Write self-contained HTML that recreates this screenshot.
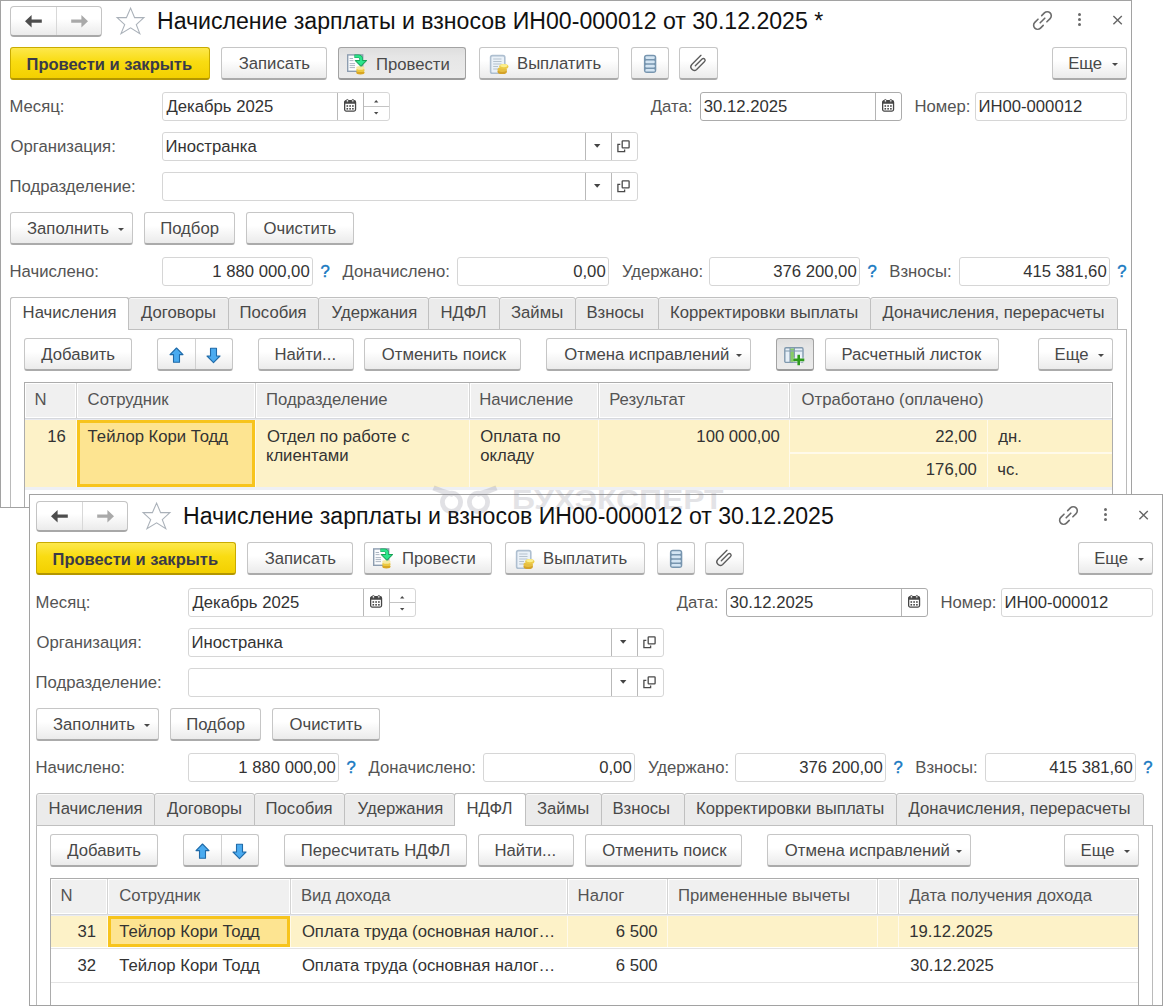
<!DOCTYPE html>
<html><head><meta charset="utf-8"><style>
html,body{margin:0;padding:0;}
body{width:1163px;height:1006px;overflow:hidden;position:relative;background:#fff;font-family:"Liberation Sans", sans-serif;}
body div{position:absolute;}
.t{white-space:nowrap;line-height:20px;}
</style></head><body>
<div style="left:0;top:0;width:1132px;height:508px;overflow:hidden;background:#fff">
<div style="left:10px;top:6px;width:92px;height:31px;box-sizing:border-box;border:1px solid #c4c4c4;border-bottom:2px solid #a8a8a8;border-radius:4px;background:linear-gradient(#ffffff 0%,#ffffff 42%,#f0f0f0 85%,#ebebeb 100%);"></div>
<div style="left:56px;top:7px;width:1px;height:28px;background:#d8d8d8;"></div>
<svg style="position:absolute;left:24px;top:14px;overflow:visible" width="20" height="14" viewBox="0 0 20 14"><path d="M1 7.2 L7.6 1 L7.6 5.6 L17.8 5.6 L17.8 8.8 L7.6 8.8 L7.6 13.4 Z" fill="#4d4d4d"/></svg>
<svg style="position:absolute;left:69px;top:14px;overflow:visible" width="20" height="14" viewBox="0 0 20 14"><path d="M19 7.2 L12.4 1 L12.4 5.6 L2.2 5.6 L2.2 8.8 L12.4 8.8 L12.4 13.4 Z" fill="#a9a9a9"/></svg>
<svg style="position:absolute;left:115px;top:6px;overflow:visible" width="32" height="30" viewBox="0 0 32 30"><path d="M15.6 2.1 L19.6 11.6 L28.9 11.6 L21.3 18.7 L24.8 27.6 L15.6 21.9 L6 27.6 L9.7 18.7 L2.1 11.6 L11.4 11.6 Z" fill="none" stroke="#aab1b9" stroke-width="1.1" stroke-linejoin="miter"/></svg>
<div class="t" style="left:157px;top:11.3px;font-size:23.1px;color:#111;font-weight:normal;">Начисление зарплаты и взносов ИН00-000012 от 30.12.2025 *</div>
<svg style="position:absolute;left:1031px;top:9px;overflow:visible" width="23" height="23" viewBox="0 0 23 23"><g fill="none" stroke="#6c6c6c" stroke-width="1.6" stroke-linecap="round"><path d="M10.7 6.6 L13.4 3.9 A3.3 3.3 0 0 1 19.1 9.6 L15.9 12.8"/><path d="M12.2 16.4 L9.5 19.1 A3.3 3.3 0 0 1 3.8 13.4 L7 10.2"/><path d="M9.2 13.8 L13.8 9.2"/></g></svg>
<div style="left:1077.6px;top:12.8px;width:3.6px;height:3.6px;border-radius:50%;background:#6a6a6a;"></div>
<div style="left:1077.6px;top:17.85px;width:3.6px;height:3.6px;border-radius:50%;background:#6a6a6a;"></div>
<div style="left:1077.6px;top:22.9px;width:3.6px;height:3.6px;border-radius:50%;background:#6a6a6a;"></div>
<svg style="position:absolute;left:1111px;top:14px;overflow:visible" width="13" height="12" viewBox="0 0 13 12"><path d="M2.4 2.1 L10.8 10.3 M10.8 2.1 L2.4 10.3" stroke="#666" stroke-width="1.4"/></svg>
<div style="left:10px;top:47px;width:200px;height:33px;box-sizing:border-box;border:1px solid #c9ab00;border-bottom:2px solid #b39600;border-radius:3px;background:linear-gradient(#fde84c 0%,#f9dc12 45%,#f3d000 100%);"></div>
<div class="t" style="left:26.6px;top:53.9px;font-size:16.5px;color:#3a3a48;font-weight:bold;">Провести и закрыть</div>
<div style="left:221px;top:47px;width:106px;height:33px;box-sizing:border-box;border:1px solid #c6c6c6;border-bottom:2px solid #ababab;border-radius:3px;background:linear-gradient(#ffffff 0%,#ffffff 42%,#f0f0f0 85%,#ebebeb 100%);"></div>
<div class="t" style="left:238.7px;top:53.9px;font-size:16.7px;color:#484848;font-weight:normal;">Записать</div>
<div style="left:338px;top:47px;width:128px;height:33px;box-sizing:border-box;border:1px solid #a3a3a3;border-bottom:2px solid #9a9a9a;border-radius:3px;background:linear-gradient(#dedede 0%,#e6e6e6 30%,#ebebeb 100%);"></div>
<svg style="position:absolute;left:346px;top:53px;overflow:visible" width="22" height="24" viewBox="0 0 22 24">
    <rect x="1.7" y="1.9" width="15" height="16.4" fill="#fbfcfe" stroke="#8d9db0" stroke-width="1.4"/>
    <g stroke="#a3aebb" stroke-width="0.9"><path d="M3.6 5.5 H7"/><path d="M3.6 7.6 H7.5"/><path d="M3.6 10.6 H9"/><path d="M3.6 12.6 H9"/><path d="M3.6 14.6 H9"/></g>
    <ellipse cx="14.4" cy="19.6" rx="4.2" ry="1.9" fill="#d9a622"/>
    <ellipse cx="14.4" cy="17.2" rx="4.2" ry="1.9" fill="#ecc940"/>
    <ellipse cx="14.4" cy="14.9" rx="4.2" ry="1.8" fill="#f6e9a0"/>
    <path d="M8.4 3.3 H12.4 Q15.1 3.3 15.1 6 V8.6" fill="none" stroke="#15a255" stroke-width="3.6"/>
    <path d="M9.1 7.5 H20.8 L14.9 13.4 Z" fill="#15a255" stroke="#15a255" stroke-width="1" stroke-linejoin="round"/>
    <path d="M8.9 3.3 H12.4 Q15.1 3.3 15.1 6 V9" fill="none" stroke="#2be58c" stroke-width="2.3"/>
    <path d="M10.4 8.1 H19.4 L14.9 12.4 Z" fill="#2be58c"/>
    </svg>
<div class="t" style="left:376px;top:54.9px;font-size:16.7px;color:#4a4a4a;font-weight:normal;">Провести</div>
<div style="left:479px;top:47px;width:140px;height:33px;box-sizing:border-box;border:1px solid #c6c6c6;border-bottom:2px solid #ababab;border-radius:3px;background:linear-gradient(#ffffff 0%,#ffffff 42%,#f0f0f0 85%,#ebebeb 100%);"></div>
<svg style="position:absolute;left:487.5px;top:52px;overflow:visible" width="24" height="24" viewBox="0 0 24 24">
    <rect x="2.6" y="3.6" width="14.2" height="17.6" rx="1.8" fill="#eaf1f8" stroke="#aebfd0" stroke-width="1.6"/>
    <g stroke="#b5c2ce" stroke-width="1"><path d="M5.2 7 H13.5"/><path d="M5.2 9.5 H13.5"/><path d="M5.2 12 H13.5"/><path d="M5.2 14.5 H10"/><path d="M5.2 17 H10"/></g>
    <ellipse cx="14.2" cy="19.4" rx="4.7" ry="2.6" fill="#d4a228"/>
    <ellipse cx="14.2" cy="17.6" rx="4.7" ry="2.4" fill="#e6bf42"/>
    <ellipse cx="15.8" cy="14.4" rx="4.6" ry="2.5" fill="#eccb48"/>
    <ellipse cx="15.8" cy="13.6" rx="3.6" ry="1.6" fill="#fbef8e"/>
    </svg>
<div class="t" style="left:517px;top:53.9px;font-size:16.7px;color:#484848;font-weight:normal;">Выплатить</div>
<div style="left:631px;top:47px;width:38px;height:33px;box-sizing:border-box;border:1px solid #c6c6c6;border-bottom:2px solid #ababab;border-radius:3px;background:linear-gradient(#ffffff 0%,#ffffff 42%,#f0f0f0 85%,#ebebeb 100%);"></div>
<svg style="position:absolute;left:643px;top:54.2px;overflow:visible" width="14" height="20" viewBox="0 0 14 20">
    <rect x="0.9" y="0.8" width="12.4" height="18.2" rx="3" fill="#7795af"/>
    <g fill="#d4e5f3"><rect x="2.4" y="2.3" width="9.4" height="2.7" rx="1.2"/><rect x="2.4" y="6.5" width="9.4" height="2.7" rx="1.2"/><rect x="2.4" y="10.7" width="9.4" height="2.7" rx="1.2"/><rect x="2.4" y="14.9" width="9.4" height="2.7" rx="1.2"/></g>
    </svg>
<div style="left:679px;top:47px;width:39px;height:33px;box-sizing:border-box;border:1px solid #c6c6c6;border-bottom:2px solid #ababab;border-radius:3px;background:linear-gradient(#ffffff 0%,#ffffff 42%,#f0f0f0 85%,#ebebeb 100%);"></div>
<svg style="position:absolute;left:686px;top:50px;overflow:visible" width="24" height="24" viewBox="0 0 24 24"><path d="M14.97 5.35 L5.78 14.55 A3.45 3.45 0 0 0 10.66 19.42 L18.58 11.51 A1.75 1.75 0 0 0 16.10 9.03 L9.31 15.82" fill="none" stroke="#5c5c5c" stroke-width="1.35" stroke-linecap="round"/></svg>
<div style="left:1052px;top:47px;width:75px;height:33px;box-sizing:border-box;border:1px solid #c6c6c6;border-bottom:2px solid #ababab;border-radius:3px;background:linear-gradient(#ffffff 0%,#ffffff 42%,#f0f0f0 85%,#ebebeb 100%);"></div>
<div class="t" style="left:1068.2px;top:53.9px;font-size:16.7px;color:#484848;font-weight:normal;">Еще</div>
<svg style="position:absolute;left:1112px;top:62.9px;overflow:visible" width="6" height="3"><path d="M0 0 L6 0 L3 3 Z" fill="#484848"/></svg>
<div class="t" style="left:9.5px;top:97.2px;font-size:16.7px;color:#545454;font-weight:normal;">Месяц:</div>
<div class="t" style="left:10.5px;top:137.2px;font-size:16.7px;color:#545454;font-weight:normal;">Организация:</div>
<div class="t" style="left:9.5px;top:177.2px;font-size:16.7px;color:#545454;font-weight:normal;">Подразделение:</div>
<div style="left:162px;top:92px;width:228px;height:29px;box-sizing:border-box;border:1px solid #d6d6d6;border-radius:3px;background:#fff;"></div>
<div style="left:337px;top:93px;width:1px;height:27px;background:#b9b9b9;"></div>
<div style="left:363px;top:93px;width:1px;height:27px;background:#b9b9b9;"></div>
<div style="left:364px;top:106px;width:25px;height:1px;background:#c4c4c4;"></div>
<svg style="position:absolute;left:344.1px;top:99.1px;overflow:visible" width="13" height="13" viewBox="0 0 13 13">
    <rect x="0.65" y="1.75" width="10.9" height="10.3" rx="1.5" fill="#fff" stroke="#464646" stroke-width="1.3"/>
    <rect x="0.65" y="1.75" width="10.9" height="3.1" rx="0.8" fill="#464646"/>
    <rect x="2.3" y="0.5" width="2.1" height="2.7" rx="1" fill="#fff" stroke="#464646" stroke-width="0.9"/>
    <rect x="7.8" y="0.5" width="2.1" height="2.7" rx="1" fill="#fff" stroke="#464646" stroke-width="0.9"/>
    <g fill="#464646"><rect x="2.5" y="6.2" width="1.6" height="1.6"/><rect x="5.3" y="6.2" width="1.6" height="1.6"/><rect x="8.1" y="6.2" width="1.6" height="1.6"/>
    <rect x="2.5" y="9" width="1.6" height="1.6"/><rect x="5.3" y="9" width="1.6" height="1.6"/><rect x="8.1" y="9" width="1.6" height="1.6"/></g>
    </svg>
<svg style="position:absolute;left:374.2px;top:99.65px;overflow:visible" width="4.4" height="2.5"><path d="M0 2.5 L4.4 2.5 L2.2 0 Z" fill="#4a4a4a"/></svg>
<svg style="position:absolute;left:374.2px;top:112.05px;overflow:visible" width="4.4" height="2.5"><path d="M0 0 L4.4 0 L2.2 2.5 Z" fill="#4a4a4a"/></svg>
<div class="t" style="left:166.5px;top:97.2px;font-size:16.7px;color:#333333;font-weight:normal;">Декабрь 2025</div>
<div class="t" style="left:650.8px;top:97.2px;font-size:16.7px;color:#545454;font-weight:normal;">Дата:</div>
<div style="left:700px;top:92px;width:202px;height:29px;box-sizing:border-box;border:1px solid #acacac;border-radius:3px;background:#fff;"></div>
<div style="left:875px;top:93px;width:1px;height:27px;background:#b4b4b4;"></div>
<svg style="position:absolute;left:882.1px;top:99.1px;overflow:visible" width="13" height="13" viewBox="0 0 13 13">
    <rect x="0.65" y="1.75" width="10.9" height="10.3" rx="1.5" fill="#fff" stroke="#464646" stroke-width="1.3"/>
    <rect x="0.65" y="1.75" width="10.9" height="3.1" rx="0.8" fill="#464646"/>
    <rect x="2.3" y="0.5" width="2.1" height="2.7" rx="1" fill="#fff" stroke="#464646" stroke-width="0.9"/>
    <rect x="7.8" y="0.5" width="2.1" height="2.7" rx="1" fill="#fff" stroke="#464646" stroke-width="0.9"/>
    <g fill="#464646"><rect x="2.5" y="6.2" width="1.6" height="1.6"/><rect x="5.3" y="6.2" width="1.6" height="1.6"/><rect x="8.1" y="6.2" width="1.6" height="1.6"/>
    <rect x="2.5" y="9" width="1.6" height="1.6"/><rect x="5.3" y="9" width="1.6" height="1.6"/><rect x="8.1" y="9" width="1.6" height="1.6"/></g>
    </svg>
<div class="t" style="left:703.8px;top:97.2px;font-size:16.7px;color:#333333;font-weight:normal;">30.12.2025</div>
<div class="t" style="left:914.5px;top:97.2px;font-size:16.7px;color:#545454;font-weight:normal;">Номер:</div>
<div style="left:975px;top:92px;width:152px;height:29px;box-sizing:border-box;border:1px solid #d6d6d6;border-radius:3px;background:#fff;"></div>
<div class="t" style="left:978.4px;top:97.2px;font-size:16.7px;color:#333333;font-weight:normal;">ИН00-000012</div>
<div style="left:162px;top:132px;width:476px;height:29px;box-sizing:border-box;border:1px solid #d6d6d6;border-radius:3px;background:#fff;"></div>
<div style="left:585px;top:133px;width:1px;height:27px;background:#b9b9b9;"></div>
<div style="left:611px;top:133px;width:1px;height:27px;background:#b9b9b9;"></div>
<svg style="position:absolute;left:594.3px;top:144.1px;overflow:visible" width="6.4" height="3.8"><path d="M0 0 L6.4 0 L3.2 3.8 Z" fill="#444"/></svg>
<svg style="position:absolute;left:617px;top:139.6px;overflow:visible" width="14" height="13" viewBox="0 0 14 13"><g fill="none" stroke="#4a4a4a" stroke-width="1.3"><rect x="5.2" y="0.9" width="6.9" height="6.9" rx="0.6"/><path d="M3.3 4.3 H0.9 V11.7 H7.6 V9.6"/></g></svg>
<div class="t" style="left:165.5px;top:137.2px;font-size:16.7px;color:#333333;font-weight:normal;">Иностранка</div>
<div style="left:162px;top:172px;width:476px;height:29px;box-sizing:border-box;border:1px solid #d6d6d6;border-radius:3px;background:#fff;"></div>
<div style="left:585px;top:173px;width:1px;height:27px;background:#b9b9b9;"></div>
<div style="left:611px;top:173px;width:1px;height:27px;background:#b9b9b9;"></div>
<svg style="position:absolute;left:594.3px;top:184.1px;overflow:visible" width="6.4" height="3.8"><path d="M0 0 L6.4 0 L3.2 3.8 Z" fill="#444"/></svg>
<svg style="position:absolute;left:617px;top:179.6px;overflow:visible" width="14" height="13" viewBox="0 0 14 13"><g fill="none" stroke="#4a4a4a" stroke-width="1.3"><rect x="5.2" y="0.9" width="6.9" height="6.9" rx="0.6"/><path d="M3.3 4.3 H0.9 V11.7 H7.6 V9.6"/></g></svg>
<div style="left:10px;top:212px;width:123px;height:33px;box-sizing:border-box;border:1px solid #c6c6c6;border-bottom:2px solid #ababab;border-radius:3px;background:linear-gradient(#ffffff 0%,#ffffff 42%,#f0f0f0 85%,#ebebeb 100%);"></div>
<div class="t" style="left:27px;top:219.4px;font-size:16.7px;color:#484848;font-weight:normal;">Заполнить</div>
<svg style="position:absolute;left:118px;top:228.3px;overflow:visible" width="6" height="3"><path d="M0 0 L6 0 L3 3 Z" fill="#484848"/></svg>
<div style="left:144px;top:212px;width:91px;height:33px;box-sizing:border-box;border:1px solid #c6c6c6;border-bottom:2px solid #ababab;border-radius:3px;background:linear-gradient(#ffffff 0%,#ffffff 42%,#f0f0f0 85%,#ebebeb 100%);"></div>
<div class="t" style="left:160.2px;top:219.4px;font-size:16.7px;color:#484848;font-weight:normal;">Подбор</div>
<div style="left:246px;top:212px;width:108px;height:33px;box-sizing:border-box;border:1px solid #c6c6c6;border-bottom:2px solid #ababab;border-radius:3px;background:linear-gradient(#ffffff 0%,#ffffff 42%,#f0f0f0 85%,#ebebeb 100%);"></div>
<div class="t" style="left:263.5px;top:219.4px;font-size:16.7px;color:#484848;font-weight:normal;">Очистить</div>
<div class="t" style="left:9.5px;top:262.4px;font-size:16.7px;color:#545454;font-weight:normal;">Начислено:</div>
<div style="left:162px;top:257px;width:151px;height:29px;box-sizing:border-box;border:1px solid #d6d6d6;border-radius:3px;background:#fff;"></div>
<div class="t" style="right:822.32px;top:262.4px;font-size:16.7px;color:#333333;font-weight:normal;">1 880 000,00</div>
<div class="t" style="left:320.6px;top:262.4px;font-size:16.7px;color:#1b7ac2;font-weight:normal;-webkit-text-stroke:0.45px #1b7ac2;">?</div>
<div class="t" style="left:342.6px;top:262.4px;font-size:16.7px;color:#545454;font-weight:normal;">Доначислено:</div>
<div style="left:457px;top:257px;width:152px;height:29px;box-sizing:border-box;border:1px solid #d6d6d6;border-radius:3px;background:#fff;"></div>
<div class="t" style="right:526.32px;top:262.4px;font-size:16.7px;color:#333333;font-weight:normal;">0,00</div>
<div class="t" style="left:622px;top:262.4px;font-size:16.7px;color:#545454;font-weight:normal;">Удержано:</div>
<div style="left:709px;top:257px;width:151px;height:29px;box-sizing:border-box;border:1px solid #d6d6d6;border-radius:3px;background:#fff;"></div>
<div class="t" style="right:275.32px;top:262.4px;font-size:16.7px;color:#333333;font-weight:normal;">376 200,00</div>
<div class="t" style="left:867.6px;top:262.4px;font-size:16.7px;color:#1b7ac2;font-weight:normal;-webkit-text-stroke:0.45px #1b7ac2;">?</div>
<div class="t" style="left:889.3px;top:262.4px;font-size:16.7px;color:#545454;font-weight:normal;">Взносы:</div>
<div style="left:959px;top:257px;width:151px;height:29px;box-sizing:border-box;border:1px solid #d6d6d6;border-radius:3px;background:#fff;"></div>
<div class="t" style="right:25.32px;top:262.4px;font-size:16.7px;color:#333333;font-weight:normal;">415 381,60</div>
<div class="t" style="left:1117.3px;top:262.4px;font-size:16.7px;color:#1b7ac2;font-weight:normal;-webkit-text-stroke:0.45px #1b7ac2;">?</div>
<div style="left:10px;top:329px;width:1117px;height:1071px;box-sizing:border-box;border:1px solid #bababa;background:#fff;"></div>
<div style="left:10px;top:297px;width:119px;height:33px;box-sizing:border-box;border:1px solid #c0c0c0;border-bottom:none;border-radius:3px 3px 0 0;background:#fff;"></div>
<div style="left:128px;top:297px;width:101px;height:33px;box-sizing:border-box;border:1px solid #c0c0c0;border-radius:3px 3px 0 0;background:#ebebeb;box-shadow:inset 0 1px 0 #f8f8f8;"></div>
<div style="left:228px;top:297px;width:91px;height:33px;box-sizing:border-box;border:1px solid #c0c0c0;border-radius:3px 3px 0 0;background:#ebebeb;box-shadow:inset 0 1px 0 #f8f8f8;"></div>
<div style="left:318px;top:297px;width:111px;height:33px;box-sizing:border-box;border:1px solid #c0c0c0;border-radius:3px 3px 0 0;background:#ebebeb;box-shadow:inset 0 1px 0 #f8f8f8;"></div>
<div style="left:428px;top:297px;width:72px;height:33px;box-sizing:border-box;border:1px solid #c0c0c0;border-radius:3px 3px 0 0;background:#ebebeb;box-shadow:inset 0 1px 0 #f8f8f8;"></div>
<div style="left:499px;top:297px;width:77px;height:33px;box-sizing:border-box;border:1px solid #c0c0c0;border-radius:3px 3px 0 0;background:#ebebeb;box-shadow:inset 0 1px 0 #f8f8f8;"></div>
<div style="left:575px;top:297px;width:84px;height:33px;box-sizing:border-box;border:1px solid #c0c0c0;border-radius:3px 3px 0 0;background:#ebebeb;box-shadow:inset 0 1px 0 #f8f8f8;"></div>
<div style="left:658px;top:297px;width:213px;height:33px;box-sizing:border-box;border:1px solid #c0c0c0;border-radius:3px 3px 0 0;background:#ebebeb;box-shadow:inset 0 1px 0 #f8f8f8;"></div>
<div style="left:870px;top:297px;width:248px;height:33px;box-sizing:border-box;border:1px solid #c0c0c0;border-radius:3px 3px 0 0;background:#ebebeb;box-shadow:inset 0 1px 0 #f8f8f8;"></div>
<div style="left:10px;top:297px;width:119px;height:33px;box-sizing:border-box;border:1px solid #c0c0c0;border-bottom:none;border-radius:3px 3px 0 0;background:#fff;"></div>
<div class="t" style="left:22.6px;top:303.4px;font-size:16.7px;color:#484848;font-weight:normal;">Начисления</div>
<div class="t" style="left:141px;top:303.4px;font-size:16.7px;color:#484848;font-weight:normal;">Договоры</div>
<div class="t" style="left:239.6px;top:303.4px;font-size:16.7px;color:#484848;font-weight:normal;">Пособия</div>
<div class="t" style="left:331.6px;top:303.4px;font-size:16.7px;color:#484848;font-weight:normal;">Удержания</div>
<div class="t" style="left:440.4px;top:303.4px;font-size:16.7px;color:#484848;font-weight:normal;">НДФЛ</div>
<div class="t" style="left:511px;top:303.4px;font-size:16.7px;color:#484848;font-weight:normal;">Займы</div>
<div class="t" style="left:586.4px;top:303.4px;font-size:16.7px;color:#484848;font-weight:normal;">Взносы</div>
<div class="t" style="left:670px;top:303.4px;font-size:16.7px;color:#484848;font-weight:normal;">Корректировки выплаты</div>
<div class="t" style="left:882.6px;top:303.4px;font-size:16.7px;color:#484848;font-weight:normal;">Доначисления, перерасчеты</div>
<div style="left:24px;top:338px;width:108px;height:33px;box-sizing:border-box;border:1px solid #c6c6c6;border-bottom:2px solid #ababab;border-radius:3px;background:linear-gradient(#ffffff 0%,#ffffff 42%,#f0f0f0 85%,#ebebeb 100%);"></div>
<div class="t" style="left:41.3px;top:345.3px;font-size:16.7px;color:#484848;font-weight:normal;">Добавить</div>
<div style="left:157px;top:338px;width:76px;height:33px;box-sizing:border-box;border:1px solid #c6c6c6;border-bottom:2px solid #ababab;border-radius:3px;background:linear-gradient(#ffffff 0%,#ffffff 42%,#f0f0f0 85%,#ebebeb 100%);"></div>
<div style="left:195px;top:339px;width:1px;height:30px;background:#d0d0d0;"></div>
<svg style="position:absolute;left:168.8px;top:347px;overflow:visible" width="16" height="17" viewBox="0 0 16 17"><path d="M7.5 1 L14 7.6 L10.5 7.6 L10.5 15.3 L4.5 15.3 L4.5 7.6 L1 7.6 Z" fill="#4aabf0" stroke="#1f6aa8" stroke-width="1.1" stroke-linejoin="round"/></svg>
<svg style="position:absolute;left:205.6px;top:347px;overflow:visible" width="16" height="17" viewBox="0 0 16 17"><path d="M7.5 15.6 L14 9 L10.5 9 L10.5 1.3 L4.5 1.3 L4.5 9 L1 9 Z" fill="#4aabf0" stroke="#1f6aa8" stroke-width="1.1" stroke-linejoin="round"/></svg>
<div style="left:258px;top:338px;width:96px;height:33px;box-sizing:border-box;border:1px solid #c6c6c6;border-bottom:2px solid #ababab;border-radius:3px;background:linear-gradient(#ffffff 0%,#ffffff 42%,#f0f0f0 85%,#ebebeb 100%);"></div>
<div class="t" style="left:274.5px;top:345.3px;font-size:16.7px;color:#484848;font-weight:normal;">Найти...</div>
<div style="left:364px;top:338px;width:157px;height:33px;box-sizing:border-box;border:1px solid #c6c6c6;border-bottom:2px solid #ababab;border-radius:3px;background:linear-gradient(#ffffff 0%,#ffffff 42%,#f0f0f0 85%,#ebebeb 100%);"></div>
<div class="t" style="left:381.8px;top:345.3px;font-size:16.7px;color:#484848;font-weight:normal;">Отменить поиск</div>
<div style="left:546px;top:338px;width:205px;height:33px;box-sizing:border-box;border:1px solid #c6c6c6;border-bottom:2px solid #ababab;border-radius:3px;background:linear-gradient(#ffffff 0%,#ffffff 42%,#f0f0f0 85%,#ebebeb 100%);"></div>
<div class="t" style="left:564.3px;top:345.3px;font-size:16.7px;color:#484848;font-weight:normal;">Отмена исправлений</div>
<svg style="position:absolute;left:736px;top:354.2px;overflow:visible" width="6" height="3"><path d="M0 0 L6 0 L3 3 Z" fill="#484848"/></svg>
<div style="left:776px;top:338px;width:38px;height:33px;box-sizing:border-box;border:1px solid #a3a3a3;border-bottom:2px solid #9a9a9a;border-radius:3px;background:linear-gradient(#dedede 0%,#e6e6e6 30%,#ebebeb 100%);"></div>
<svg style="position:absolute;left:784px;top:343.8px;overflow:visible" width="24" height="24" viewBox="0 0 24 24">
    <rect x="0.8" y="3.8" width="18.2" height="14.6" rx="1.2" fill="#e6eff7" stroke="#8099ae" stroke-width="1.4"/>
    <rect x="6" y="4.5" width="4.4" height="13.3" fill="#86cc66"/>
    <path d="M0.8 7 H19" stroke="#8da4b7" stroke-width="1.2"/>
    <path d="M6 3.8 V18.4 M10.4 3.8 V18.4" stroke="#8099ae" stroke-width="1.1"/>
    <path d="M15 10.8 V21.2 M9.2 16 H20.2" stroke="#ffffff" stroke-width="4.4" opacity="0.55"/>
    <path d="M14.7 10.8 V21.2 M9.3 15.9 H20.3" stroke="#2e9b1c" stroke-width="2.6"/>
    </svg>
<div style="left:825px;top:338px;width:174px;height:33px;box-sizing:border-box;border:1px solid #c6c6c6;border-bottom:2px solid #ababab;border-radius:3px;background:linear-gradient(#ffffff 0%,#ffffff 42%,#f0f0f0 85%,#ebebeb 100%);"></div>
<div class="t" style="left:841.5px;top:345.3px;font-size:16.7px;color:#484848;font-weight:normal;">Расчетный листок</div>
<div style="left:1038px;top:338px;width:75px;height:33px;box-sizing:border-box;border:1px solid #c6c6c6;border-bottom:2px solid #ababab;border-radius:3px;background:linear-gradient(#ffffff 0%,#ffffff 42%,#f0f0f0 85%,#ebebeb 100%);"></div>
<div class="t" style="left:1054.5px;top:345.3px;font-size:16.7px;color:#484848;font-weight:normal;">Еще</div>
<svg style="position:absolute;left:1098px;top:354.2px;overflow:visible" width="6" height="3"><path d="M0 0 L6 0 L3 3 Z" fill="#484848"/></svg>
<div style="left:24px;top:382px;width:1089px;height:1018px;box-sizing:border-box;border:1px solid #acacac;background:#fff;"></div>
<div style="left:26px;top:384px;width:49px;height:33px;background:#f0f0f0;"></div>
<div style="left:78px;top:384px;width:176px;height:33px;background:#f0f0f0;"></div>
<div style="left:257px;top:384px;width:211px;height:33px;background:#f0f0f0;"></div>
<div style="left:471px;top:384px;width:126px;height:33px;background:#f0f0f0;"></div>
<div style="left:600px;top:384px;width:188px;height:33px;background:#f0f0f0;"></div>
<div style="left:791px;top:384px;width:320px;height:33px;background:#f0f0f0;"></div>
<div style="left:25px;top:418px;width:1087px;height:1px;background:#d6d8dc;"></div>
<div style="left:25px;top:419px;width:1087px;height:1px;background:#e8eaf2;"></div>
<div style="left:76px;top:383px;width:1px;height:35px;background:#d4d4d4;"></div>
<div style="left:255px;top:383px;width:1px;height:35px;background:#d4d4d4;"></div>
<div style="left:469px;top:383px;width:1px;height:35px;background:#d4d4d4;"></div>
<div style="left:598px;top:383px;width:1px;height:35px;background:#d4d4d4;"></div>
<div style="left:789px;top:383px;width:1px;height:35px;background:#d4d4d4;"></div>
<div class="t" style="left:34.6px;top:390.4px;font-size:16.7px;color:#545454;font-weight:normal;">N</div>
<div class="t" style="left:87.6px;top:390.4px;font-size:16.7px;color:#545454;font-weight:normal;">Сотрудник</div>
<div class="t" style="left:266px;top:390.4px;font-size:16.7px;color:#545454;font-weight:normal;">Подразделение</div>
<div class="t" style="left:479.2px;top:390.4px;font-size:16.7px;color:#545454;font-weight:normal;">Начисление</div>
<div class="t" style="left:609.2px;top:390.4px;font-size:16.7px;color:#545454;font-weight:normal;">Результат</div>
<div class="t" style="left:801.6px;top:390.4px;font-size:16.7px;color:#545454;font-weight:normal;">Отработано (оплачено)</div>
<div style="left:25px;top:420px;width:1087px;height:67px;background:#fdf2c8;"></div>
<div style="left:76px;top:420px;width:1px;height:67px;background:#fffaea;"></div>
<div style="left:255px;top:420px;width:1px;height:67px;background:#fffaea;"></div>
<div style="left:469px;top:420px;width:1px;height:67px;background:#fffaea;"></div>
<div style="left:598px;top:420px;width:1px;height:67px;background:#fffaea;"></div>
<div style="left:789px;top:420px;width:1px;height:67px;background:#fffaea;"></div>
<div style="left:987px;top:420px;width:1px;height:67px;background:#fffaea;"></div>
<div style="left:790px;top:452px;width:322px;height:2px;background:#fffaea;"></div>
<div style="left:77px;top:420px;width:178px;height:67px;box-sizing:border-box;border:3px solid #f7c41d;background:#fde491;"></div>
<div style="left:25px;top:487px;width:1087px;height:3px;background:#eef0f4;"></div>
<div class="t" style="right:1066.32px;top:426.5px;font-size:16.7px;color:#333333;font-weight:normal;">16</div>
<div class="t" style="left:87.6px;top:426.5px;font-size:16.7px;color:#333333;font-weight:normal;">Тейлор Кори Тодд</div>
<div class="t" style="left:266.9px;top:426.5px;font-size:16.7px;color:#333333;font-weight:normal;">Отдел по работе с</div>
<div class="t" style="left:265.9px;top:445.5px;font-size:16.7px;color:#333333;font-weight:normal;">клиентами</div>
<div class="t" style="left:480.2px;top:426.5px;font-size:16.7px;color:#333333;font-weight:normal;">Оплата по</div>
<div class="t" style="left:480.2px;top:445.5px;font-size:16.7px;color:#333333;font-weight:normal;">окладу</div>
<div class="t" style="right:352.12px;top:426.5px;font-size:16.7px;color:#333333;font-weight:normal;">100 000,00</div>
<div class="t" style="right:155.12px;top:426.5px;font-size:16.7px;color:#333333;font-weight:normal;">22,00</div>
<div class="t" style="left:998.2px;top:426.5px;font-size:16.7px;color:#333333;font-weight:normal;">дн.</div>
<div class="t" style="right:155.12px;top:460.4px;font-size:16.7px;color:#333333;font-weight:normal;">176,00</div>
<div class="t" style="left:997.2px;top:460.4px;font-size:16.7px;color:#333333;font-weight:normal;">чс.</div>
</div>
<div style="left:0px;top:0px;width:1132px;height:508px;box-sizing:border-box;border:1px solid #a2a2a2;"></div>
<div style="left:29px;top:494px;width:1134px;height:512px;background:#fff;"></div>
<div style="left:36px;top:501px;width:92px;height:31px;box-sizing:border-box;border:1px solid #c4c4c4;border-bottom:2px solid #a8a8a8;border-radius:4px;background:linear-gradient(#ffffff 0%,#ffffff 42%,#f0f0f0 85%,#ebebeb 100%);"></div>
<div style="left:82px;top:502px;width:1px;height:28px;background:#d8d8d8;"></div>
<svg style="position:absolute;left:50px;top:509px;overflow:visible" width="20" height="14" viewBox="0 0 20 14"><path d="M1 7.2 L7.6 1 L7.6 5.6 L17.8 5.6 L17.8 8.8 L7.6 8.8 L7.6 13.4 Z" fill="#4d4d4d"/></svg>
<svg style="position:absolute;left:95px;top:509px;overflow:visible" width="20" height="14" viewBox="0 0 20 14"><path d="M19 7.2 L12.4 1 L12.4 5.6 L2.2 5.6 L2.2 8.8 L12.4 8.8 L12.4 13.4 Z" fill="#a9a9a9"/></svg>
<svg style="position:absolute;left:141px;top:501px;overflow:visible" width="32" height="30" viewBox="0 0 32 30"><path d="M15.6 2.1 L19.6 11.6 L28.9 11.6 L21.3 18.7 L24.8 27.6 L15.6 21.9 L6 27.6 L9.7 18.7 L2.1 11.6 L11.4 11.6 Z" fill="none" stroke="#aab1b9" stroke-width="1.1" stroke-linejoin="miter"/></svg>
<div class="t" style="left:183px;top:506.4px;font-size:23.1px;color:#111;font-weight:normal;">Начисление зарплаты и взносов ИН00-000012 от 30.12.2025</div>
<svg style="position:absolute;left:1057px;top:504px;overflow:visible" width="23" height="23" viewBox="0 0 23 23"><g fill="none" stroke="#6c6c6c" stroke-width="1.6" stroke-linecap="round"><path d="M10.7 6.6 L13.4 3.9 A3.3 3.3 0 0 1 19.1 9.6 L15.9 12.8"/><path d="M12.2 16.4 L9.5 19.1 A3.3 3.3 0 0 1 3.8 13.4 L7 10.2"/><path d="M9.2 13.8 L13.8 9.2"/></g></svg>
<div style="left:1103.6px;top:507.8px;width:3.6px;height:3.6px;border-radius:50%;background:#6a6a6a;"></div>
<div style="left:1103.6px;top:512.85px;width:3.6px;height:3.6px;border-radius:50%;background:#6a6a6a;"></div>
<div style="left:1103.6px;top:517.9px;width:3.6px;height:3.6px;border-radius:50%;background:#6a6a6a;"></div>
<svg style="position:absolute;left:1137px;top:509px;overflow:visible" width="13" height="12" viewBox="0 0 13 12"><path d="M2.4 2.1 L10.8 10.3 M10.8 2.1 L2.4 10.3" stroke="#666" stroke-width="1.4"/></svg>
<div style="left:36px;top:542px;width:200px;height:33px;box-sizing:border-box;border:1px solid #c9ab00;border-bottom:2px solid #b39600;border-radius:3px;background:linear-gradient(#fde84c 0%,#f9dc12 45%,#f3d000 100%);"></div>
<div class="t" style="left:52.6px;top:548.9px;font-size:16.5px;color:#3a3a48;font-weight:bold;">Провести и закрыть</div>
<div style="left:247px;top:542px;width:106px;height:33px;box-sizing:border-box;border:1px solid #c6c6c6;border-bottom:2px solid #ababab;border-radius:3px;background:linear-gradient(#ffffff 0%,#ffffff 42%,#f0f0f0 85%,#ebebeb 100%);"></div>
<div class="t" style="left:264.7px;top:548.9px;font-size:16.7px;color:#484848;font-weight:normal;">Записать</div>
<div style="left:364px;top:542px;width:128px;height:33px;box-sizing:border-box;border:1px solid #c6c6c6;border-bottom:2px solid #ababab;border-radius:3px;background:linear-gradient(#ffffff 0%,#ffffff 42%,#f0f0f0 85%,#ebebeb 100%);"></div>
<svg style="position:absolute;left:372px;top:547px;overflow:visible" width="22" height="24" viewBox="0 0 22 24">
    <rect x="1.7" y="1.9" width="15" height="16.4" fill="#fbfcfe" stroke="#8d9db0" stroke-width="1.4"/>
    <g stroke="#a3aebb" stroke-width="0.9"><path d="M3.6 5.5 H7"/><path d="M3.6 7.6 H7.5"/><path d="M3.6 10.6 H9"/><path d="M3.6 12.6 H9"/><path d="M3.6 14.6 H9"/></g>
    <ellipse cx="14.4" cy="19.6" rx="4.2" ry="1.9" fill="#d9a622"/>
    <ellipse cx="14.4" cy="17.2" rx="4.2" ry="1.9" fill="#ecc940"/>
    <ellipse cx="14.4" cy="14.9" rx="4.2" ry="1.8" fill="#f6e9a0"/>
    <path d="M8.4 3.3 H12.4 Q15.1 3.3 15.1 6 V8.6" fill="none" stroke="#15a255" stroke-width="3.6"/>
    <path d="M9.1 7.5 H20.8 L14.9 13.4 Z" fill="#15a255" stroke="#15a255" stroke-width="1" stroke-linejoin="round"/>
    <path d="M8.9 3.3 H12.4 Q15.1 3.3 15.1 6 V9" fill="none" stroke="#2be58c" stroke-width="2.3"/>
    <path d="M10.4 8.1 H19.4 L14.9 12.4 Z" fill="#2be58c"/>
    </svg>
<div class="t" style="left:402px;top:548.9px;font-size:16.7px;color:#484848;font-weight:normal;">Провести</div>
<div style="left:505px;top:542px;width:140px;height:33px;box-sizing:border-box;border:1px solid #c6c6c6;border-bottom:2px solid #ababab;border-radius:3px;background:linear-gradient(#ffffff 0%,#ffffff 42%,#f0f0f0 85%,#ebebeb 100%);"></div>
<svg style="position:absolute;left:513.5px;top:547px;overflow:visible" width="24" height="24" viewBox="0 0 24 24">
    <rect x="2.6" y="3.6" width="14.2" height="17.6" rx="1.8" fill="#eaf1f8" stroke="#aebfd0" stroke-width="1.6"/>
    <g stroke="#b5c2ce" stroke-width="1"><path d="M5.2 7 H13.5"/><path d="M5.2 9.5 H13.5"/><path d="M5.2 12 H13.5"/><path d="M5.2 14.5 H10"/><path d="M5.2 17 H10"/></g>
    <ellipse cx="14.2" cy="19.4" rx="4.7" ry="2.6" fill="#d4a228"/>
    <ellipse cx="14.2" cy="17.6" rx="4.7" ry="2.4" fill="#e6bf42"/>
    <ellipse cx="15.8" cy="14.4" rx="4.6" ry="2.5" fill="#eccb48"/>
    <ellipse cx="15.8" cy="13.6" rx="3.6" ry="1.6" fill="#fbef8e"/>
    </svg>
<div class="t" style="left:543px;top:548.9px;font-size:16.7px;color:#484848;font-weight:normal;">Выплатить</div>
<div style="left:657px;top:542px;width:38px;height:33px;box-sizing:border-box;border:1px solid #c6c6c6;border-bottom:2px solid #ababab;border-radius:3px;background:linear-gradient(#ffffff 0%,#ffffff 42%,#f0f0f0 85%,#ebebeb 100%);"></div>
<svg style="position:absolute;left:669px;top:549.2px;overflow:visible" width="14" height="20" viewBox="0 0 14 20">
    <rect x="0.9" y="0.8" width="12.4" height="18.2" rx="3" fill="#7795af"/>
    <g fill="#d4e5f3"><rect x="2.4" y="2.3" width="9.4" height="2.7" rx="1.2"/><rect x="2.4" y="6.5" width="9.4" height="2.7" rx="1.2"/><rect x="2.4" y="10.7" width="9.4" height="2.7" rx="1.2"/><rect x="2.4" y="14.9" width="9.4" height="2.7" rx="1.2"/></g>
    </svg>
<div style="left:705px;top:542px;width:39px;height:33px;box-sizing:border-box;border:1px solid #c6c6c6;border-bottom:2px solid #ababab;border-radius:3px;background:linear-gradient(#ffffff 0%,#ffffff 42%,#f0f0f0 85%,#ebebeb 100%);"></div>
<svg style="position:absolute;left:712px;top:545px;overflow:visible" width="24" height="24" viewBox="0 0 24 24"><path d="M14.97 5.35 L5.78 14.55 A3.45 3.45 0 0 0 10.66 19.42 L18.58 11.51 A1.75 1.75 0 0 0 16.10 9.03 L9.31 15.82" fill="none" stroke="#5c5c5c" stroke-width="1.35" stroke-linecap="round"/></svg>
<div style="left:1078px;top:542px;width:75px;height:33px;box-sizing:border-box;border:1px solid #c6c6c6;border-bottom:2px solid #ababab;border-radius:3px;background:linear-gradient(#ffffff 0%,#ffffff 42%,#f0f0f0 85%,#ebebeb 100%);"></div>
<div class="t" style="left:1094.2px;top:548.9px;font-size:16.7px;color:#484848;font-weight:normal;">Еще</div>
<svg style="position:absolute;left:1138px;top:557.9px;overflow:visible" width="6" height="3"><path d="M0 0 L6 0 L3 3 Z" fill="#484848"/></svg>
<div class="t" style="left:35.5px;top:593.2px;font-size:16.7px;color:#545454;font-weight:normal;">Месяц:</div>
<div class="t" style="left:36.5px;top:633.2px;font-size:16.7px;color:#545454;font-weight:normal;">Организация:</div>
<div class="t" style="left:35.5px;top:673.2px;font-size:16.7px;color:#545454;font-weight:normal;">Подразделение:</div>
<div style="left:188px;top:588px;width:228px;height:29px;box-sizing:border-box;border:1px solid #d6d6d6;border-radius:3px;background:#fff;"></div>
<div style="left:363px;top:589px;width:1px;height:27px;background:#b9b9b9;"></div>
<div style="left:389px;top:589px;width:1px;height:27px;background:#b9b9b9;"></div>
<div style="left:390px;top:602px;width:25px;height:1px;background:#c4c4c4;"></div>
<svg style="position:absolute;left:370.1px;top:595.1px;overflow:visible" width="13" height="13" viewBox="0 0 13 13">
    <rect x="0.65" y="1.75" width="10.9" height="10.3" rx="1.5" fill="#fff" stroke="#464646" stroke-width="1.3"/>
    <rect x="0.65" y="1.75" width="10.9" height="3.1" rx="0.8" fill="#464646"/>
    <rect x="2.3" y="0.5" width="2.1" height="2.7" rx="1" fill="#fff" stroke="#464646" stroke-width="0.9"/>
    <rect x="7.8" y="0.5" width="2.1" height="2.7" rx="1" fill="#fff" stroke="#464646" stroke-width="0.9"/>
    <g fill="#464646"><rect x="2.5" y="6.2" width="1.6" height="1.6"/><rect x="5.3" y="6.2" width="1.6" height="1.6"/><rect x="8.1" y="6.2" width="1.6" height="1.6"/>
    <rect x="2.5" y="9" width="1.6" height="1.6"/><rect x="5.3" y="9" width="1.6" height="1.6"/><rect x="8.1" y="9" width="1.6" height="1.6"/></g>
    </svg>
<svg style="position:absolute;left:400.2px;top:595.65px;overflow:visible" width="4.4" height="2.5"><path d="M0 2.5 L4.4 2.5 L2.2 0 Z" fill="#4a4a4a"/></svg>
<svg style="position:absolute;left:400.2px;top:608.05px;overflow:visible" width="4.4" height="2.5"><path d="M0 0 L4.4 0 L2.2 2.5 Z" fill="#4a4a4a"/></svg>
<div class="t" style="left:192.5px;top:593.2px;font-size:16.7px;color:#333333;font-weight:normal;">Декабрь 2025</div>
<div class="t" style="left:676.8px;top:593.2px;font-size:16.7px;color:#545454;font-weight:normal;">Дата:</div>
<div style="left:726px;top:588px;width:202px;height:29px;box-sizing:border-box;border:1px solid #acacac;border-radius:3px;background:#fff;"></div>
<div style="left:901px;top:589px;width:1px;height:27px;background:#b4b4b4;"></div>
<svg style="position:absolute;left:908.1px;top:595.1px;overflow:visible" width="13" height="13" viewBox="0 0 13 13">
    <rect x="0.65" y="1.75" width="10.9" height="10.3" rx="1.5" fill="#fff" stroke="#464646" stroke-width="1.3"/>
    <rect x="0.65" y="1.75" width="10.9" height="3.1" rx="0.8" fill="#464646"/>
    <rect x="2.3" y="0.5" width="2.1" height="2.7" rx="1" fill="#fff" stroke="#464646" stroke-width="0.9"/>
    <rect x="7.8" y="0.5" width="2.1" height="2.7" rx="1" fill="#fff" stroke="#464646" stroke-width="0.9"/>
    <g fill="#464646"><rect x="2.5" y="6.2" width="1.6" height="1.6"/><rect x="5.3" y="6.2" width="1.6" height="1.6"/><rect x="8.1" y="6.2" width="1.6" height="1.6"/>
    <rect x="2.5" y="9" width="1.6" height="1.6"/><rect x="5.3" y="9" width="1.6" height="1.6"/><rect x="8.1" y="9" width="1.6" height="1.6"/></g>
    </svg>
<div class="t" style="left:729.8px;top:593.2px;font-size:16.7px;color:#333333;font-weight:normal;">30.12.2025</div>
<div class="t" style="left:940.5px;top:593.2px;font-size:16.7px;color:#545454;font-weight:normal;">Номер:</div>
<div style="left:1001px;top:588px;width:152px;height:29px;box-sizing:border-box;border:1px solid #d6d6d6;border-radius:3px;background:#fff;"></div>
<div class="t" style="left:1004.4px;top:593.2px;font-size:16.7px;color:#333333;font-weight:normal;">ИН00-000012</div>
<div style="left:188px;top:628px;width:476px;height:29px;box-sizing:border-box;border:1px solid #d6d6d6;border-radius:3px;background:#fff;"></div>
<div style="left:611px;top:629px;width:1px;height:27px;background:#b9b9b9;"></div>
<div style="left:637px;top:629px;width:1px;height:27px;background:#b9b9b9;"></div>
<svg style="position:absolute;left:620.3px;top:640.1px;overflow:visible" width="6.4" height="3.8"><path d="M0 0 L6.4 0 L3.2 3.8 Z" fill="#444"/></svg>
<svg style="position:absolute;left:643px;top:635.6px;overflow:visible" width="14" height="13" viewBox="0 0 14 13"><g fill="none" stroke="#4a4a4a" stroke-width="1.3"><rect x="5.2" y="0.9" width="6.9" height="6.9" rx="0.6"/><path d="M3.3 4.3 H0.9 V11.7 H7.6 V9.6"/></g></svg>
<div class="t" style="left:191.5px;top:633.2px;font-size:16.7px;color:#333333;font-weight:normal;">Иностранка</div>
<div style="left:188px;top:668px;width:476px;height:29px;box-sizing:border-box;border:1px solid #d6d6d6;border-radius:3px;background:#fff;"></div>
<div style="left:611px;top:669px;width:1px;height:27px;background:#b9b9b9;"></div>
<div style="left:637px;top:669px;width:1px;height:27px;background:#b9b9b9;"></div>
<svg style="position:absolute;left:620.3px;top:680.1px;overflow:visible" width="6.4" height="3.8"><path d="M0 0 L6.4 0 L3.2 3.8 Z" fill="#444"/></svg>
<svg style="position:absolute;left:643px;top:675.6px;overflow:visible" width="14" height="13" viewBox="0 0 14 13"><g fill="none" stroke="#4a4a4a" stroke-width="1.3"><rect x="5.2" y="0.9" width="6.9" height="6.9" rx="0.6"/><path d="M3.3 4.3 H0.9 V11.7 H7.6 V9.6"/></g></svg>
<div style="left:36px;top:708px;width:123px;height:33px;box-sizing:border-box;border:1px solid #c6c6c6;border-bottom:2px solid #ababab;border-radius:3px;background:linear-gradient(#ffffff 0%,#ffffff 42%,#f0f0f0 85%,#ebebeb 100%);"></div>
<div class="t" style="left:53px;top:715.4px;font-size:16.7px;color:#484848;font-weight:normal;">Заполнить</div>
<svg style="position:absolute;left:144px;top:724.3px;overflow:visible" width="6" height="3"><path d="M0 0 L6 0 L3 3 Z" fill="#484848"/></svg>
<div style="left:170px;top:708px;width:91px;height:33px;box-sizing:border-box;border:1px solid #c6c6c6;border-bottom:2px solid #ababab;border-radius:3px;background:linear-gradient(#ffffff 0%,#ffffff 42%,#f0f0f0 85%,#ebebeb 100%);"></div>
<div class="t" style="left:186.2px;top:715.4px;font-size:16.7px;color:#484848;font-weight:normal;">Подбор</div>
<div style="left:272px;top:708px;width:108px;height:33px;box-sizing:border-box;border:1px solid #c6c6c6;border-bottom:2px solid #ababab;border-radius:3px;background:linear-gradient(#ffffff 0%,#ffffff 42%,#f0f0f0 85%,#ebebeb 100%);"></div>
<div class="t" style="left:289.5px;top:715.4px;font-size:16.7px;color:#484848;font-weight:normal;">Очистить</div>
<div class="t" style="left:35.5px;top:758.4px;font-size:16.7px;color:#545454;font-weight:normal;">Начислено:</div>
<div style="left:188px;top:753px;width:151px;height:29px;box-sizing:border-box;border:1px solid #d6d6d6;border-radius:3px;background:#fff;"></div>
<div class="t" style="right:827.32px;top:758.4px;font-size:16.7px;color:#333333;font-weight:normal;">1 880 000,00</div>
<div class="t" style="left:346.6px;top:758.4px;font-size:16.7px;color:#1b7ac2;font-weight:normal;-webkit-text-stroke:0.45px #1b7ac2;">?</div>
<div class="t" style="left:368.6px;top:758.4px;font-size:16.7px;color:#545454;font-weight:normal;">Доначислено:</div>
<div style="left:483px;top:753px;width:152px;height:29px;box-sizing:border-box;border:1px solid #d6d6d6;border-radius:3px;background:#fff;"></div>
<div class="t" style="right:531.32px;top:758.4px;font-size:16.7px;color:#333333;font-weight:normal;">0,00</div>
<div class="t" style="left:648px;top:758.4px;font-size:16.7px;color:#545454;font-weight:normal;">Удержано:</div>
<div style="left:735px;top:753px;width:151px;height:29px;box-sizing:border-box;border:1px solid #d6d6d6;border-radius:3px;background:#fff;"></div>
<div class="t" style="right:280.32px;top:758.4px;font-size:16.7px;color:#333333;font-weight:normal;">376 200,00</div>
<div class="t" style="left:893.6px;top:758.4px;font-size:16.7px;color:#1b7ac2;font-weight:normal;-webkit-text-stroke:0.45px #1b7ac2;">?</div>
<div class="t" style="left:915.3px;top:758.4px;font-size:16.7px;color:#545454;font-weight:normal;">Взносы:</div>
<div style="left:985px;top:753px;width:151px;height:29px;box-sizing:border-box;border:1px solid #d6d6d6;border-radius:3px;background:#fff;"></div>
<div class="t" style="right:30.32px;top:758.4px;font-size:16.7px;color:#333333;font-weight:normal;">415 381,60</div>
<div class="t" style="left:1143.3px;top:758.4px;font-size:16.7px;color:#1b7ac2;font-weight:normal;-webkit-text-stroke:0.45px #1b7ac2;">?</div>
<div style="left:36px;top:825px;width:1117px;height:575px;box-sizing:border-box;border:1px solid #bababa;background:#fff;"></div>
<div style="left:36px;top:793px;width:119px;height:33px;box-sizing:border-box;border:1px solid #c0c0c0;border-radius:3px 3px 0 0;background:#ebebeb;box-shadow:inset 0 1px 0 #f8f8f8;"></div>
<div style="left:154px;top:793px;width:101px;height:33px;box-sizing:border-box;border:1px solid #c0c0c0;border-radius:3px 3px 0 0;background:#ebebeb;box-shadow:inset 0 1px 0 #f8f8f8;"></div>
<div style="left:254px;top:793px;width:91px;height:33px;box-sizing:border-box;border:1px solid #c0c0c0;border-radius:3px 3px 0 0;background:#ebebeb;box-shadow:inset 0 1px 0 #f8f8f8;"></div>
<div style="left:344px;top:793px;width:111px;height:33px;box-sizing:border-box;border:1px solid #c0c0c0;border-radius:3px 3px 0 0;background:#ebebeb;box-shadow:inset 0 1px 0 #f8f8f8;"></div>
<div style="left:454px;top:793px;width:72px;height:33px;box-sizing:border-box;border:1px solid #c0c0c0;border-bottom:none;border-radius:3px 3px 0 0;background:#fff;"></div>
<div style="left:525px;top:793px;width:77px;height:33px;box-sizing:border-box;border:1px solid #c0c0c0;border-radius:3px 3px 0 0;background:#ebebeb;box-shadow:inset 0 1px 0 #f8f8f8;"></div>
<div style="left:601px;top:793px;width:84px;height:33px;box-sizing:border-box;border:1px solid #c0c0c0;border-radius:3px 3px 0 0;background:#ebebeb;box-shadow:inset 0 1px 0 #f8f8f8;"></div>
<div style="left:684px;top:793px;width:213px;height:33px;box-sizing:border-box;border:1px solid #c0c0c0;border-radius:3px 3px 0 0;background:#ebebeb;box-shadow:inset 0 1px 0 #f8f8f8;"></div>
<div style="left:896px;top:793px;width:248px;height:33px;box-sizing:border-box;border:1px solid #c0c0c0;border-radius:3px 3px 0 0;background:#ebebeb;box-shadow:inset 0 1px 0 #f8f8f8;"></div>
<div style="left:454px;top:793px;width:72px;height:33px;box-sizing:border-box;border:1px solid #c0c0c0;border-bottom:none;border-radius:3px 3px 0 0;background:#fff;"></div>
<div class="t" style="left:48.6px;top:799.4px;font-size:16.7px;color:#484848;font-weight:normal;">Начисления</div>
<div class="t" style="left:167px;top:799.4px;font-size:16.7px;color:#484848;font-weight:normal;">Договоры</div>
<div class="t" style="left:265.6px;top:799.4px;font-size:16.7px;color:#484848;font-weight:normal;">Пособия</div>
<div class="t" style="left:357.6px;top:799.4px;font-size:16.7px;color:#484848;font-weight:normal;">Удержания</div>
<div class="t" style="left:466.4px;top:799.4px;font-size:16.7px;color:#484848;font-weight:normal;">НДФЛ</div>
<div class="t" style="left:537px;top:799.4px;font-size:16.7px;color:#484848;font-weight:normal;">Займы</div>
<div class="t" style="left:612.4px;top:799.4px;font-size:16.7px;color:#484848;font-weight:normal;">Взносы</div>
<div class="t" style="left:696px;top:799.4px;font-size:16.7px;color:#484848;font-weight:normal;">Корректировки выплаты</div>
<div class="t" style="left:908.6px;top:799.4px;font-size:16.7px;color:#484848;font-weight:normal;">Доначисления, перерасчеты</div>
<div style="left:50px;top:834px;width:108px;height:33px;box-sizing:border-box;border:1px solid #c6c6c6;border-bottom:2px solid #ababab;border-radius:3px;background:linear-gradient(#ffffff 0%,#ffffff 42%,#f0f0f0 85%,#ebebeb 100%);"></div>
<div class="t" style="left:67.3px;top:841.3px;font-size:16.7px;color:#484848;font-weight:normal;">Добавить</div>
<div style="left:183px;top:834px;width:76px;height:33px;box-sizing:border-box;border:1px solid #c6c6c6;border-bottom:2px solid #ababab;border-radius:3px;background:linear-gradient(#ffffff 0%,#ffffff 42%,#f0f0f0 85%,#ebebeb 100%);"></div>
<div style="left:221px;top:835px;width:1px;height:30px;background:#d0d0d0;"></div>
<svg style="position:absolute;left:194.8px;top:843px;overflow:visible" width="16" height="17" viewBox="0 0 16 17"><path d="M7.5 1 L14 7.6 L10.5 7.6 L10.5 15.3 L4.5 15.3 L4.5 7.6 L1 7.6 Z" fill="#4aabf0" stroke="#1f6aa8" stroke-width="1.1" stroke-linejoin="round"/></svg>
<svg style="position:absolute;left:231.6px;top:843px;overflow:visible" width="16" height="17" viewBox="0 0 16 17"><path d="M7.5 15.6 L14 9 L10.5 9 L10.5 1.3 L4.5 1.3 L4.5 9 L1 9 Z" fill="#4aabf0" stroke="#1f6aa8" stroke-width="1.1" stroke-linejoin="round"/></svg>
<div style="left:284px;top:834px;width:183px;height:33px;box-sizing:border-box;border:1px solid #c6c6c6;border-bottom:2px solid #ababab;border-radius:3px;background:linear-gradient(#ffffff 0%,#ffffff 42%,#f0f0f0 85%,#ebebeb 100%);"></div>
<div class="t" style="left:300.8px;top:841.3px;font-size:16.7px;color:#484848;font-weight:normal;">Пересчитать НДФЛ</div>
<div style="left:478px;top:834px;width:96px;height:33px;box-sizing:border-box;border:1px solid #c6c6c6;border-bottom:2px solid #ababab;border-radius:3px;background:linear-gradient(#ffffff 0%,#ffffff 42%,#f0f0f0 85%,#ebebeb 100%);"></div>
<div class="t" style="left:494.5px;top:841.3px;font-size:16.7px;color:#484848;font-weight:normal;">Найти...</div>
<div style="left:585px;top:834px;width:157px;height:33px;box-sizing:border-box;border:1px solid #c6c6c6;border-bottom:2px solid #ababab;border-radius:3px;background:linear-gradient(#ffffff 0%,#ffffff 42%,#f0f0f0 85%,#ebebeb 100%);"></div>
<div class="t" style="left:602.3px;top:841.3px;font-size:16.7px;color:#484848;font-weight:normal;">Отменить поиск</div>
<div style="left:767px;top:834px;width:204px;height:33px;box-sizing:border-box;border:1px solid #c6c6c6;border-bottom:2px solid #ababab;border-radius:3px;background:linear-gradient(#ffffff 0%,#ffffff 42%,#f0f0f0 85%,#ebebeb 100%);"></div>
<div class="t" style="left:784.8px;top:841.3px;font-size:16.7px;color:#484848;font-weight:normal;">Отмена исправлений</div>
<svg style="position:absolute;left:956.3px;top:850.2px;overflow:visible" width="6" height="3"><path d="M0 0 L6 0 L3 3 Z" fill="#484848"/></svg>
<div style="left:1064px;top:834px;width:75px;height:33px;box-sizing:border-box;border:1px solid #c6c6c6;border-bottom:2px solid #ababab;border-radius:3px;background:linear-gradient(#ffffff 0%,#ffffff 42%,#f0f0f0 85%,#ebebeb 100%);"></div>
<div class="t" style="left:1080.5px;top:841.3px;font-size:16.7px;color:#484848;font-weight:normal;">Еще</div>
<svg style="position:absolute;left:1124px;top:850.2px;overflow:visible" width="6" height="3"><path d="M0 0 L6 0 L3 3 Z" fill="#484848"/></svg>
<div style="left:50px;top:878px;width:1089px;height:522px;box-sizing:border-box;border:1px solid #acacac;background:#fff;"></div>
<div style="left:52px;top:880px;width:54px;height:33px;background:#f0f0f0;"></div>
<div style="left:109px;top:880px;width:180px;height:33px;background:#f0f0f0;"></div>
<div style="left:292px;top:880px;width:274px;height:33px;background:#f0f0f0;"></div>
<div style="left:569px;top:880px;width:97px;height:33px;background:#f0f0f0;"></div>
<div style="left:669px;top:880px;width:207px;height:33px;background:#f0f0f0;"></div>
<div style="left:879px;top:880px;width:18px;height:33px;background:#f0f0f0;"></div>
<div style="left:900px;top:880px;width:237px;height:33px;background:#f0f0f0;"></div>
<div style="left:51px;top:914px;width:1087px;height:1px;background:#d6d8dc;"></div>
<div style="left:51px;top:915px;width:1087px;height:1px;background:#e8eaf2;"></div>
<div style="left:107px;top:879px;width:1px;height:35px;background:#d4d4d4;"></div>
<div style="left:290px;top:879px;width:1px;height:35px;background:#d4d4d4;"></div>
<div style="left:567px;top:879px;width:1px;height:35px;background:#d4d4d4;"></div>
<div style="left:667px;top:879px;width:1px;height:35px;background:#d4d4d4;"></div>
<div style="left:877px;top:879px;width:1px;height:35px;background:#d4d4d4;"></div>
<div style="left:898px;top:879px;width:1px;height:35px;background:#d4d4d4;"></div>
<div class="t" style="left:60.4px;top:885.9px;font-size:16.7px;color:#545454;font-weight:normal;">N</div>
<div class="t" style="left:119.2px;top:885.9px;font-size:16.7px;color:#545454;font-weight:normal;">Сотрудник</div>
<div class="t" style="left:300.9px;top:885.9px;font-size:16.7px;color:#545454;font-weight:normal;">Вид дохода</div>
<div class="t" style="left:577.6px;top:885.9px;font-size:16.7px;color:#545454;font-weight:normal;">Налог</div>
<div class="t" style="left:677.9px;top:885.9px;font-size:16.7px;color:#545454;font-weight:normal;">Примененные вычеты</div>
<div class="t" style="left:909.2px;top:885.9px;font-size:16.7px;color:#545454;font-weight:normal;">Дата получения дохода</div>
<div style="left:51px;top:916px;width:1087px;height:31px;background:#fdf2c8;"></div>
<div style="left:107px;top:916px;width:1px;height:31px;background:#fffaea;"></div>
<div style="left:290px;top:916px;width:1px;height:31px;background:#fffaea;"></div>
<div style="left:567px;top:916px;width:1px;height:31px;background:#fffaea;"></div>
<div style="left:667px;top:916px;width:1px;height:31px;background:#fffaea;"></div>
<div style="left:877px;top:916px;width:1px;height:31px;background:#fffaea;"></div>
<div style="left:898px;top:916px;width:1px;height:31px;background:#fffaea;"></div>
<div style="left:108px;top:916px;width:182px;height:31px;box-sizing:border-box;border:3px solid #f7c41d;background:#fde491;"></div>
<div style="left:51px;top:948px;width:1087px;height:1px;background:#e4e4e4;"></div>
<div style="left:51px;top:982px;width:1087px;height:1px;background:#e4e4e4;"></div>
<div class="t" style="right:1066.92px;top:921.8px;font-size:16.7px;color:#333333;font-weight:normal;">31</div>
<div class="t" style="left:119.2px;top:921.8px;font-size:16.7px;color:#333333;font-weight:normal;">Тейлор Кори Тодд</div>
<div class="t" style="left:301.9px;top:921.8px;font-size:16.7px;color:#333333;font-weight:normal;">Оплата труда (основная налог…</div>
<div class="t" style="right:505.52px;top:921.8px;font-size:16.7px;color:#333333;font-weight:normal;">6 500</div>
<div class="t" style="left:909.3px;top:921.8px;font-size:16.7px;color:#333333;font-weight:normal;">19.12.2025</div>
<div class="t" style="right:1066.92px;top:955.7px;font-size:16.7px;color:#333333;font-weight:normal;">32</div>
<div class="t" style="left:119.2px;top:955.7px;font-size:16.7px;color:#333333;font-weight:normal;">Тейлор Кори Тодд</div>
<div class="t" style="left:301.9px;top:955.7px;font-size:16.7px;color:#333333;font-weight:normal;">Оплата труда (основная налог…</div>
<div class="t" style="right:505.52px;top:955.7px;font-size:16.7px;color:#333333;font-weight:normal;">6 500</div>
<div class="t" style="left:910.3px;top:955.7px;font-size:16.7px;color:#333333;font-weight:normal;">30.12.2025</div>
<div style="left:29px;top:494px;width:1134px;height:512px;box-sizing:border-box;border:1px solid #a2a2a2;"></div>
<svg style="position:absolute;left:0;top:0" width="1163" height="1006" viewBox="0 0 1163 1006"><g opacity="0.2"><g fill="none" stroke="#6f6f80" stroke-width="4.8"><circle cx="451.5" cy="502.3" r="9.1"/><circle cx="478.5" cy="502.3" r="9.1"/></g><path d="M433.5 487.8 Q443 492 453 494.5 M496.5 487.8 Q487 492 477 494.5" fill="none" stroke="#6f6f80" stroke-width="5.2" stroke-linecap="butt"/></g></svg>
<div class="t" style="left:512px;top:489.5px;font-size:27px;font-weight:bold;color:#6f6f80;opacity:0.19;transform:scaleX(1.18);transform-origin:0 0">БУХЭКСПЕРТ</div>
</body></html>
